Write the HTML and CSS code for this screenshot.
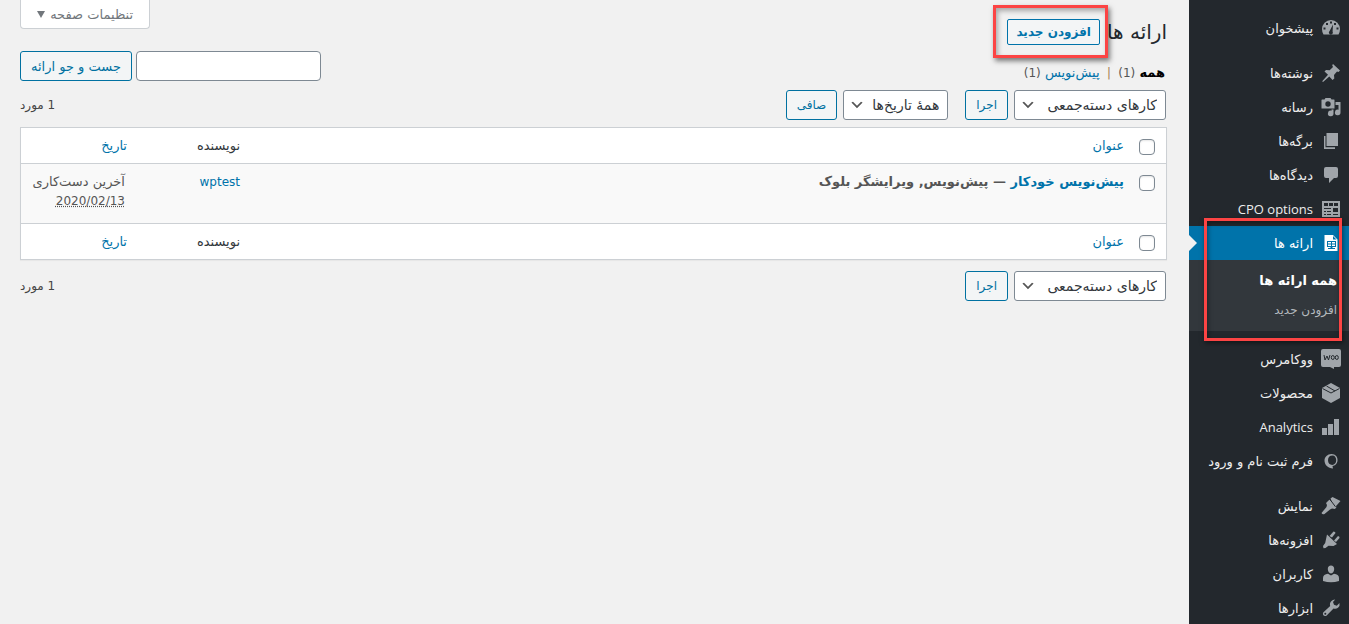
FILE: index.html
```html
<!DOCTYPE html>
<html lang="fa" dir="rtl">
<head>
<meta charset="utf-8">
<title>ارائه ها</title>
<link rel="stylesheet" href="styles.css">
</head>
<body>
<div class="layout">
  <nav class="sidebar">
    <ul class="menu">
      <li><a class="item" href="#"><svg class="icon" viewBox="0 0 20 20"><path d="M1 11a9 9 0 0 1 18 0q0 3-1.500 5.500H2.500Q1 14 1 11z"/><path class="hole" d="M9 3.500h2v2H9zM5 5h2v2H5zM13 5h2v2h-2zM2.500 9.500h2v2h-2zM15.500 9.500h2v2h-2zM12 6.500L11.600 13.500a2 2 0 1 1-3-.5z"/></svg><span>پیشخوان</span></a></li>
      <li class="separator"></li>
      <li><a class="item" href="#"><svg class="icon" viewBox="0 0 20 20"><path d="M12 1l7 6.500-1.500 1.500-1.500-.5-3 3.500.3 3.500-1.800 1.500-3.200-3.500L2 19l-.8-.8L7 11.800 3.500 8.500 5 7l3.700.2L12 4l-.8-1.700z"/></svg><span>نوشته‌ها</span></a></li>
      <li><a class="item" href="#"><svg class="icon" viewBox="0 0 20 20"><path d="M1 2.500h2.500l1-1.500h5l1 1.500H13q.5 0 .5.500v8.500H.5V3z"/><circle class="hole" cx="7" cy="7" r="2.700"/><path d="M14.500 5H19.500v10.500a2.800 2.800 0 1 1-2-2.700V8H14.500zM10.500 12.500h2v4a2.800 2.800 0 1 1-2-2.700z"/></svg><span>رسانه</span></a></li>
      <li><a class="item" href="#"><svg class="icon" viewBox="0 0 20 20"><path d="M5.500 2H17v13H5.500zM3 5h1.500v11.200H14V18H3z"/></svg><span>برگه‌ها</span></a></li>
      <li><a class="item" href="#"><svg class="icon" viewBox="0 0 20 20"><path d="M5 2h10q2 0 2 2v7q0 2-2 2h-2l-5 5v-5H5q-2 0-2-2V4q0-2 2-2z"/></svg><span>دیدگاه‌ها</span></a></li>
      <li><a class="item latin" href="#"><svg class="icon" viewBox="0 0 20 20"><path fill-rule="evenodd" d="M1 2h18v16H1zM3 4v3h4V4zM8 4v3h4V4zM13 4v3h4V4zM3 9v1h7V9zM12 9v4h5V9zM3 12v1h2v-1zM6 12v1h4v-1zM3 15v1h2v-1zM6 15v1h4v-1zM12 15v1h5v-1z"/></svg><span dir="ltr">CPO options</span></a></li>
      <li class="current">
        <a class="item" href="#"><svg class="icon" viewBox="0 0 20 20"><path fill-rule="evenodd" d="M3.500 2H12l4.500 4.500V18h-13zM6 8v6h3.500v1H7v1h7v-1h-2.500v-1H15V8zM7 9h3v1.500H7zM11 9h3v1.500h-3zM7 11.500h3V13H7zM11 11.500h3V13h-3zM12 3v3.500h3.500z"/></svg><span>ارائه ها</span></a>
        <ul class="submenu">
          <li><a class="selected" href="#">همه ارائه ها</a></li>
          <li><a href="#">افزودن جدید</a></li>
        </ul>
        <span class="marker"></span>
      </li>
      <li class="separator"></li>
      <li><a class="item" href="#"><svg class="icon" viewBox="0 0 20 20"><path d="M2 0h16q2 0 2 2v14q0 2-2 2h-5v2l-4-2H2q-2 0-2-2V2Q0 0 2 0z"/><g class="ink"><path d="M3 6l1 5 2-4 1.500 4L9 6"/><ellipse cx="11.800" cy="8.500" rx="1.500" ry="2"/><ellipse cx="15.800" cy="8.500" rx="1.500" ry="2"/></g></svg><span>ووکامرس</span></a></li>
      <li><a class="item" href="#"><svg class="icon" viewBox="0 0 20 20"><path d="M10 0l9 5v10l-9 5-9-5V5z"/><path class="ink" d="M1.500 5.500L10 10l8.500-4.500M5.500 3l8.500 5"/></svg><span>محصولات</span></a></li>
      <li><a class="item latin" href="#"><svg class="icon" viewBox="0 0 20 20"><path d="M1 11h5v7H1zM7 7h5v11H7zM13 2h5v16h-5z"/></svg><span dir="ltr">Analytics</span></a></li>
      <li><a class="item" href="#"><svg class="icon" viewBox="0 0 20 20"><path fill-rule="evenodd" d="M10.500 3c4 0 6.500 3 6 7-.5 3-2.500 4.700-5 4.900L12 17.500c-5-.5-8.500-3.500-8.500-8C3.500 6 6.500 3 10.500 3zm1 1.500C8.500 4.500 7 6.500 7 9.300s1.800 4.700 4.200 4.700 4-2 4-4.700-1.200-4.800-3.700-4.800z"/></svg><span>فرم ثبت نام و ورود</span></a></li>
      <li class="separator"></li>
      <li><a class="item" href="#"><svg class="icon" viewBox="0 0 20 20"><path d="M9.500 2.500l2-1.500 3 1.500L19.500 5 16 9l-3 3zM8.500 3.500l7 7.500-1.500 2-3-.5-2 1L3.500 18q-2 1-3-1L5.500 11 6 9 5 7z"/><path class="ink" d="M8.500 2.800l6 8"/></svg><span>نمایش</span></a></li>
      <li><a class="item" href="#"><svg class="icon" viewBox="0 0 20 20"><path d="M6 4.500l10 9.500-3.500 2-5-.2L4.500 18l-2 .2L2 16l2.200-3z"/><path d="M8.500 6l4-4.500q2 0 2 1.500L11 7.500zM13 10.500L17 6q2 .5 1.500 2L15 12z"/></svg><span>افزونه‌ها</span></a></li>
      <li><a class="item" href="#"><svg class="icon" viewBox="0 0 20 20"><path d="M10 1.500c2 0 3.200 1.500 3.200 3.500S12 9.500 10 9.500 6.800 7 6.800 5 8 1.500 10 1.500zM2 17v-3c0-2.500 2-4 5-4.200l3 1.700 3-1.700c3 .2 5 1.700 5 4.200v3q-8 2.500-16 0z"/></svg><span>کاربران</span></a></li>
      <li><a class="item" href="#"><svg class="icon" viewBox="0 0 20 20"><path d="M17 9.800c-1.500 1.200-3 1.200-4.500.7l-6.800 7C3.500 19 1 17 2.200 14.500l7-6.500c-.8-3 .8-6 5-6.500L12 4l1 2.700 2.800 1L18.500 5q.7 2.700-1.500 4.800z"/><circle class="hole" cx="4.300" cy="15.800" r="1"/></svg><span>ابزارها</span></a></li>
    </ul>
  </nav>

  <main class="content">
    <div class="topbar">
      <div class="heading">
        <h1>ارائه ها</h1>
        <a class="add-new" href="#">افزودن جدید</a>
      </div>
      <button class="screen-options" type="button">تنظیمات صفحه <svg class="caret" viewBox="0 0 8 8"><path d="M0 0h8L4 7z"/></svg></button>
    </div>

    <div class="filters">
      <div class="views"><a class="all" href="#">همه</a> <span class="count">(1)</span> <span class="bar">|</span> <a href="#">پیش‌نویس</a> <span class="count">(1)</span></div>
      <form class="search">
        <input class="field" type="search" aria-label="جست و جو ارائه">
        <button class="button" type="button">جست و جو ارائه</button>
      </form>
    </div>

    <div class="tablenav">
      <select class="select bulk" aria-label="کارهای دسته‌جمعی"><option>کارهای دسته‌جمعی</option></select>
      <button class="button apply" type="button">اجرا</button>
      <select class="select dates" aria-label="همهٔ تاریخ‌ها"><option>همهٔ تاریخ‌ها</option></select>
      <button class="button" type="button">صافی</button>
      <span class="total">1 مورد</span>
    </div>

    <table class="list">
      <thead>
        <tr><th class="check"><input type="checkbox" aria-label="گزینش همه"></th><th><a href="#">عنوان</a></th><th class="author">نویسنده</th><th class="date"><a href="#">تاریخ</a></th></tr>
      </thead>
      <tbody>
        <tr><td class="check"><input type="checkbox" aria-label="گزینش پیش‌نویس خودکار"></td><td class="title"><strong><a href="#">پیش‌نویس خودکار</a> — پیش‌نویس, ویرایشگر بلوک</strong></td><td class="author"><a class="small" href="#">wptest</a></td><td class="date">آخرین دست‌کاری<br><abbr class="small">2020/02/13</abbr></td></tr>
      </tbody>
      <tfoot>
        <tr><th class="check"><input type="checkbox" aria-label="گزینش همه"></th><th><a href="#">عنوان</a></th><th class="author">نویسنده</th><th class="date"><a href="#">تاریخ</a></th></tr>
      </tfoot>
    </table>

    <div class="tablenav">
      <select class="select bulk" aria-label="کارهای دسته‌جمعی"><option>کارهای دسته‌جمعی</option></select>
      <button class="button apply" type="button">اجرا</button>
      <span class="total">1 مورد</span>
    </div>
  </main>
</div>
</body>
</html>
```
FILE: styles.css
```css
* { box-sizing: border-box; }
body {
  margin: 0;
  background: #f1f1f1;
  color: #444;
  font: 13px/19px "DejaVu Sans", sans-serif;
}
a { color: #0073aa; text-decoration: none; }
ul { list-style: none; margin: 0; padding: 0; }
.layout { display: flex; height: 100vh; overflow: hidden; }
.small, .total, .count { font-size: 12px; }

.sidebar { flex: none; width: 160px; background: #23282d; }
.menu { padding-top: 11px; }
.menu > li { position: relative; }
.menu .separator { height: 11px; }
.item {
  display: flex;
  align-items: center;
  height: 34px;
  padding-right: 8px;
  gap: 8px;
  color: #eee;
  font-size: 13px;
  white-space: nowrap;
}
.item.latin { font-family: "Open Sans", sans-serif; font-weight: 500; line-height: 16px; }
.icon { flex: none; width: 20px; height: 20px; fill: #a0a5aa; }
.ink { fill: none; stroke: #23282d; stroke-width: 1; }
.hole { fill: #23282d; }
.current .item { background: #0073aa; color: #fff; }
.current .icon { fill: #fff; }
.current::before {
  content: "";
  position: absolute;
  left: 0;
  top: 9px;
  border: 8px solid transparent;
  border-left-color: #f1f1f1;
  border-right-width: 0;
}
.submenu { background: #32373c; padding: 7px 12px 7px 0; }
.submenu a { display: block; line-height: 28px; color: #b4b9be; font-size: 12px; }
.submenu li + li a { padding-top: 1px; }
.submenu .selected { color: #fff; font-weight: bold; font-size: 13px; }
.marker {
  position: absolute;
  top: -8px;
  right: 7px;
  width: 138px;
  height: 123px;
  border: 3px solid #fc4444;
  box-shadow: 1px 2px 5px rgba(0, 0, 0, .5), inset 1px 2px 5px rgba(0, 0, 0, .4);
  pointer-events: none;
  z-index: 1;
}

.content { flex: 1; min-width: 0; padding: 0 22px 0 20px; }
.topbar { display: flex; justify-content: space-between; align-items: flex-start; height: 51px; }
.heading { display: flex; align-items: center; gap: 7px; padding-top: 16px; }
h1 { margin: 0; font: 20px/32px "DejaVu Sans", sans-serif; color: #23282d; }
.add-new {
  position: relative;
  padding: 0 8px;
  border: 1px solid #0073aa;
  border-radius: 2px;
  background: #f3f5f6;
  font-size: 12px;
  font-weight: bold;
  line-height: 24px;
}
.add-new::after {
  content: "";
  position: absolute;
  inset: -15px -9px -14px -15px;
  border: 3px solid #fc4444;
  box-shadow: 2px 3px 5px rgba(0, 0, 0, .5), inset 2px 3px 5px rgba(0, 0, 0, .3);
  pointer-events: none;
}
.screen-options {
  height: 29px;
  padding: 0 16px;
  border: 1px solid #ccd0d4;
  border-top: 0;
  border-radius: 0 0 4px 4px;
  background: #fff;
  color: #72777c;
  font: inherit;
}
.caret { width: 8px; height: 8px; margin-right: 1px; fill: #72777c; }

.filters { display: flex; justify-content: space-between; height: 39px; }
.views { padding: 12px 2px 0 0; color: #666; }
.views .all { color: #000; font-weight: bold; }
.views .bar { margin: 0 3px; color: #a98a5c; }
.views .count { color: #555; }
.search { display: flex; gap: 4px; }
.field { width: 185px; height: 30px; border: 1px solid #7e8993; border-radius: 4px; background: #fff; }
.button {
  height: 30px;
  padding: 0 10px;
  border: 1px solid #0071a1;
  border-radius: 3px;
  background: #f3f5f6;
  color: #0071a1;
  font: inherit;
}
.tablenav { display: flex; align-items: center; gap: 6px; height: 30px; padding-right: 1px; }
.tablenav .button { font-size: 12px; }
.select {
  appearance: none;
  height: 30px;
  padding: 0 8px 0 24px;
  border: 1px solid #7e8993;
  border-radius: 3px;
  color: #32373c;
  font: inherit;
  font-size: 14px;
  background: #fff url("data:image/svg+xml,%3Csvg xmlns='http://www.w3.org/2000/svg' viewBox='0 0 20 20'%3E%3Cpath d='M5 6l5 5 5-5 2 1-7 7-7-7z' fill='%23555'/%3E%3C/svg%3E") no-repeat 5px 50% / 16px 16px;
}
.bulk { width: 152px; }
.dates { width: 105px; }
.apply { margin-left: 11px; }
.total { margin-right: auto; }

.list {
  width: 100%;
  margin: 7px 0 11px;
  table-layout: fixed;
  border: 1px solid #ccd0d4;
  border-spacing: 0;
  background: #fff;
  box-shadow: 0 1px 1px rgba(0, 0, 0, .04);
}
.list th, .list td { padding: 8px 10px; text-align: right; vertical-align: top; font-weight: normal; color: #32373c; }
.list th { height: 35px; }
.list td { height: 61px; border: solid #ccd0d4; border-width: 1px 0; background: #f9f9f9; color: #555; }
.list .check { width: 32px; padding: 11px 11px 0 0; line-height: 0; }
.list .title strong { font-weight: bold; }
.list .author { width: 113px; white-space: nowrap; }
.list .date { width: 116px; white-space: nowrap; }
.list td.date { padding-right: 12px; }
abbr { text-decoration: underline dotted; }
input[type="checkbox"] {
  appearance: none;
  width: 16px;
  height: 16px;
  margin: 0;
  border: 1px solid #7e8993;
  border-radius: 4px;
  background: #fff;
  box-shadow: inset 0 1px 2px rgba(0, 0, 0, .1);
}
```
